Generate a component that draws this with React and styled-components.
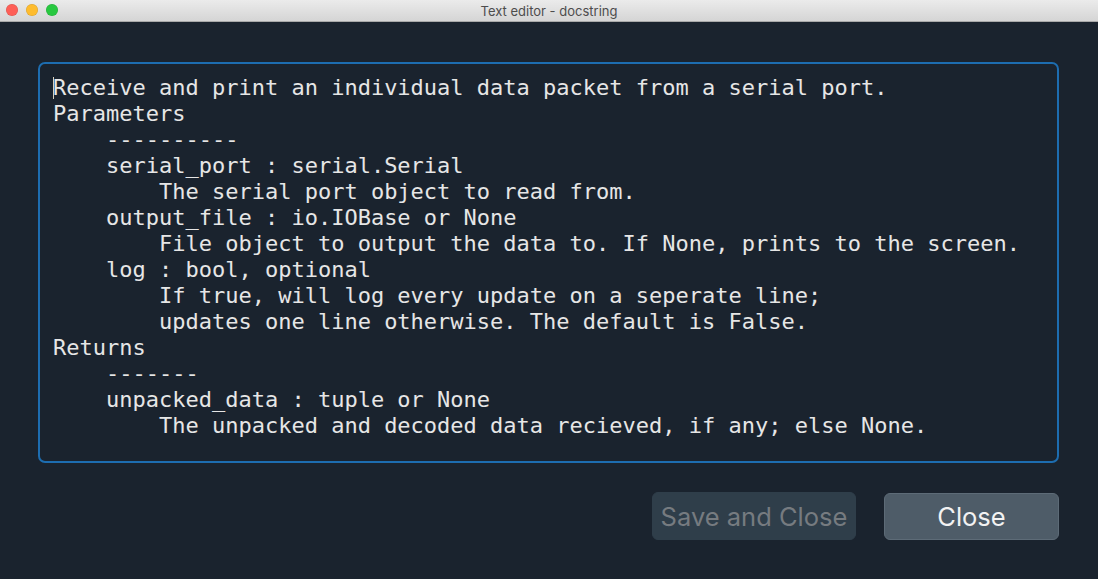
import React from "react";
import styled, { createGlobalStyle } from "styled-components";

const GlobalStyle = createGlobalStyle`
  html, body {
    margin: 0;
    padding: 0;
    background: #1a232e;
  }
  #root {
    height: 100vh;
  }
`;

const Window = styled.div`
  display: flex;
  flex-direction: column;
  width: 100%;
  height: 100%;
  background-color: #1a232e;
  overflow: hidden;
`;

const TitleBar = styled.header`
  position: relative;
  display: flex;
  align-items: center;
  justify-content: center;
  height: 21px;
  flex-shrink: 0;
  background: linear-gradient(#ebebeb, #d5d5d5);
  border-bottom: 1px solid #a9a9a9;
  font-family: "Inter", "Liberation Sans", sans-serif;
  font-size: 13px;
  color: #4d4d4d;
`;

const Lights = styled.div`
  position: absolute;
  left: 6px;
  top: 4px;
  display: flex;
  gap: 8px;
`;

const Light = styled.span`
  width: 12px;
  height: 12px;
  border-radius: 50%;
  background-color: ${(props) => props.color};
  box-shadow: inset 0 0 0 0.5px rgba(0, 0, 0, 0.15);
`;

const Body = styled.main`
  flex: 1;
  display: flex;
  flex-direction: column;
  padding: 40px 39px 39px 38px;
  gap: 29px;
`;

const Editor = styled.div`
  flex: 1;
  border: 2px solid #1d6db0;
  border-radius: 7px;
  padding: 11px 13px;
`;

const Code = styled.pre`
  position: relative;
  margin: 0;
  font-family: "DejaVu Sans Mono", monospace;
  font-size: 22px;
  line-height: 26px;
  color: #e6e6e6;
  white-space: pre;

  &::before {
    content: "";
    position: absolute;
    left: 0;
    top: 2px;
    height: 22px;
    border-left: 1px solid #d8d0c0;
  }
`;

const Actions = styled.footer`
  display: flex;
  justify-content: flex-end;
  align-items: center;
  gap: 28px;
`;

const Button = styled.button`
  height: ${(props) => (props.disabled ? "48px" : "47px")};
  width: ${(props) => props.width}px;
  border-radius: 6px;
  border: 1px solid ${(props) => (props.disabled ? "#2f3e4a" : "#5d6b77")};
  background-color: ${(props) => (props.disabled ? "#2f3e4a" : "#4e5c68")};
  color: ${(props) => (props.disabled ? "#767b80" : "#f2f2f2")};
  font-family: "Inter", "Liberation Sans", sans-serif;
  font-size: 25.5px;
  padding: 0;
`;

const docstring = `Receive and print an individual data packet from a serial port.
Parameters
    ----------
    serial_port : serial.Serial
        The serial port object to read from.
    output_file : io.IOBase or None
        File object to output the data to. If None, prints to the screen.
    log : bool, optional
        If true, will log every update on a seperate line;
        updates one line otherwise. The default is False.
Returns
    -------
    unpacked_data : tuple or None
        The unpacked and decoded data recieved, if any; else None.`;

const App = () => {
  return (
    <Window>
      <GlobalStyle />
      <TitleBar>
        <Lights>
          <Light color="#fe5f57" />
          <Light color="#febc2e" />
          <Light color="#28c840" />
        </Lights>
        Text editor - docstring
      </TitleBar>
      <Body>
        <Editor>
          <Code>{docstring}</Code>
        </Editor>
        <Actions>
          <Button disabled width={204}>
            Save and Close
          </Button>
          <Button width={175}>Close</Button>
        </Actions>
      </Body>
    </Window>
  );
};

export default App;
